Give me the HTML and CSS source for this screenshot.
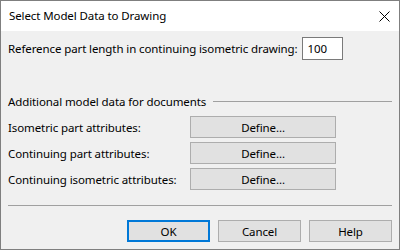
FILE: index.html
```html
<!DOCTYPE html>
<html lang="en">
<head>
  <meta charset="UTF-8">
  <title>Select Model Data to Drawing</title>
  <link rel="stylesheet" href="styles.css">
</head>
<body>
  <div class="dialog">
    <!-- Title bar -->
    <div class="titlebar">
      <span class="title">Select Model Data to Drawing</span>
      <svg class="close" width="11" height="11" viewBox="0 0 11 11">
        <path d="M0.5 0.5 L10.5 10.5 M10.5 0.5 L0.5 10.5" stroke="#000" stroke-width="1" fill="none"/>
      </svg>
    </div>

    <div class="content">
      <div class="ref-row">
        <label for="refLength">Reference part length in continuing isometric drawing:</label>
        <input type="text" id="refLength" value="100">
      </div>

      <div class="group-head">
        <span>Additional model data for documents</span>
        <span class="rule"></span>
      </div>

      <div class="attr-grid">
        <span class="attr-label">Isometric part attributes:</span>
        <button class="btn">Define...</button>
        <span class="attr-label">Continuing part attributes:</span>
        <button class="btn">Define...</button>
        <span class="attr-label">Continuing isometric attributes:</span>
        <button class="btn">Define...</button>
      </div>

      <div class="separator"></div>

      <div class="actions">
        <button class="btn btn-action btn-default">OK</button>
        <button class="btn btn-action">Cancel</button>
        <button class="btn btn-action">Help</button>
      </div>
    </div>
  </div>
</body>
</html>
```

FILE: styles.css
```css
body {
  margin: 0;
  font-family: "Noto Sans", "Open Sans", sans-serif;
  font-size: 11.5px;
  letter-spacing: -0.1px;
  color: #000;
  background: #f0f0f0;
}
.dialog {
  width: 400px;
  height: 250px;
  box-sizing: border-box;
  border: 1px solid #7f7f7f;
  background: #f0f0f0;
  display: flex;
  flex-direction: column;
}
/* Title bar */
.titlebar {
  height: 30px;
  background: #fff;
  display: flex;
  align-items: center;
  justify-content: space-between;
  padding: 0 9px 0 8px;
}
.title {
  line-height: 16px;
}
.close {
  display: block;
}
.content {
  padding: 6px 7px 0 7px;
}
.ref-row {
  display: flex;
  align-items: center;
  height: 23px;
}
.ref-row label {
  margin-right: 4px;
}
.ref-row input {
  width: 41px;
  height: 23px;
  box-sizing: border-box;
  border: 1px solid #7a7a7a;
  background: #fff;
  font: inherit;
  letter-spacing: inherit;
  padding: 0 5px;
  color: #000;
}
.group-head {
  display: flex;
  align-items: center;
  margin-top: 33px;
  height: 16px;
}
.group-head .rule {
  flex: 1;
  height: 1px;
  background: #a0a0a0;
  margin-left: 7px;
}
.attr-grid {
  display: grid;
  grid-template-columns: 182px 146px;
  grid-auto-rows: 22px;
  row-gap: 4px;
  margin-top: 7px;
  align-items: center;
}
.btn {
  font: inherit;
  letter-spacing: inherit;
  color: #000;
  background: #e1e1e1;
  border: 1px solid #adadad;
  height: 22px;
  padding: 0;
  box-sizing: border-box;
}
.separator {
  height: 1px;
  background: #a0a0a0;
  margin-top: 15px;
}
.actions {
  display: flex;
  justify-content: flex-end;
  gap: 8px;
  margin-top: 14px;
}
.btn-action {
  width: 83px;
}
.btn-default {
  border: 2px solid #0078d7;
}
```
